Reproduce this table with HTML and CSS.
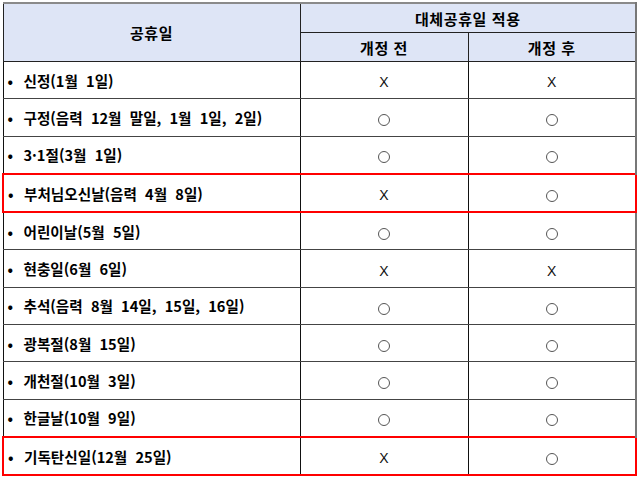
FILE: index.html
```html
<!DOCTYPE html>
<html lang="ko">
<head>
<meta charset="utf-8">
<link rel="stylesheet" href="styles.css">
</head>
<body>
<div class="wrap">
<table class="holidays">
  <colgroup>
    <col class="c-name">
    <col class="c-val">
    <col class="c-val">
  </colgroup>
  <thead>
    <tr class="h1">
      <th rowspan="2" class="h-name">공휴일</th>
      <th colspan="2" class="h-group">대체공휴일 적용</th>
    </tr>
    <tr class="h2">
      <th>개정 전</th>
      <th class="last">개정 후</th>
    </tr>
  </thead>
  <tbody>
    <tr><td class="name"><span class="dot">•</span>신정(1월&nbsp; 1일)</td><td class="v"><span class="x">X</span></td><td class="v last"><span class="x">X</span></td></tr>
    <tr><td class="name"><span class="dot">•</span>구정(음력&nbsp; 12월&nbsp; 말일,&nbsp; 1월&nbsp; 1일,&nbsp; 2일)</td><td class="v"><span class="o"></span></td><td class="v last"><span class="o"></span></td></tr>
    <tr><td class="name"><span class="dot">•</span>3·1절(3월&nbsp; 1일)</td><td class="v"><span class="o"></span></td><td class="v last"><span class="o"></span></td></tr>
    <tr class="hl"><td class="name"><span class="dot">•</span>부처님오신날(음력&nbsp; 4월&nbsp; 8일)</td><td class="v"><span class="x">X</span></td><td class="v last"><span class="o"></span></td></tr>
    <tr><td class="name"><span class="dot">•</span>어린이날(5월&nbsp; 5일)</td><td class="v"><span class="o"></span></td><td class="v last"><span class="o"></span></td></tr>
    <tr><td class="name"><span class="dot">•</span>현충일(6월&nbsp; 6일)</td><td class="v"><span class="x">X</span></td><td class="v last"><span class="x">X</span></td></tr>
    <tr><td class="name"><span class="dot">•</span>추석(음력&nbsp; 8월&nbsp; 14일,&nbsp; 15일,&nbsp; 16일)</td><td class="v"><span class="o"></span></td><td class="v last"><span class="o"></span></td></tr>
    <tr><td class="name"><span class="dot">•</span>광복절(8월&nbsp; 15일)</td><td class="v"><span class="o"></span></td><td class="v last"><span class="o"></span></td></tr>
    <tr><td class="name"><span class="dot">•</span>개천절(10월&nbsp; 3일)</td><td class="v"><span class="o"></span></td><td class="v last"><span class="o"></span></td></tr>
    <tr><td class="name"><span class="dot">•</span>한글날(10월&nbsp; 9일)</td><td class="v"><span class="o"></span></td><td class="v last"><span class="o"></span></td></tr>
    <tr class="hl"><td class="name"><span class="dot">•</span>기독탄신일(12월&nbsp; 25일)</td><td class="v"><span class="x">X</span></td><td class="v last"><span class="o"></span></td></tr>
  </tbody>
</table>
</div>
</body>
</html>
```
FILE: styles.css
```css
html, body {
  margin: 0;
  padding: 0;
  background: #ffffff;
}
body {
  font-family: "Noto Sans CJK KR", "Noto Sans", sans-serif;
  color: #000;
}
.wrap {
  padding: 2px 0 0 2px;
}
.holidays {
  border-collapse: collapse;
  table-layout: fixed;
  width: 635px;
  border-top: 2px solid #8a8a8a;
  border-right: 2px solid #777;
  border-left: 1px solid #222;
}
.c-name { width: 297px; }
.c-val { width: 168px; }

.holidays th {
  background: #dee5f6;
  font-weight: 700;
  font-size: 15px;
  letter-spacing: 0.6px;
  text-align: center;
  vertical-align: middle;
  padding: 0;
  border: 1px solid #222;
}
.h1 th { height: 28px; border-top: 2px solid #8a8a8a; }
.h2 th { height: 28px; }
.h1 .h-group { border-right: 2px solid #777; }
.h2 .last { border-right: 2px solid #777; }
.holidays td {
  height: 36.3px;
  padding: 0;
  vertical-align: middle;
  border-top: 1px solid #444;
  border-bottom: 1px solid #444;
  border-left: 1px solid #111;
  border-right: 1px solid #111;
}
.holidays td.last { border-right: 2px solid #777; }
.name {
  font-size: 14.6px;
  font-weight: 700;
  padding-left: 4px !important;
  white-space: nowrap;
}
.dot {
  display: inline-block;
  width: 16px;
  font-weight: 700;
}
.v { text-align: center; }
.x {
  font-family: "Liberation Sans", Arial, sans-serif;
  font-size: 14px;
  color: #111;
}
.o {
  display: inline-block;
  width: 10px;
  height: 10px;
  border: 1px solid #555;
  border-radius: 50%;
  vertical-align: middle;
}
.hl td {
  border-top: 2px solid #f00 !important;
  border-bottom: 2px solid #f00 !important;
}
.hl td.name { border-left: 2px solid #f00; }
.hl td.last { border-right: 2px solid #f00 !important; }
```
